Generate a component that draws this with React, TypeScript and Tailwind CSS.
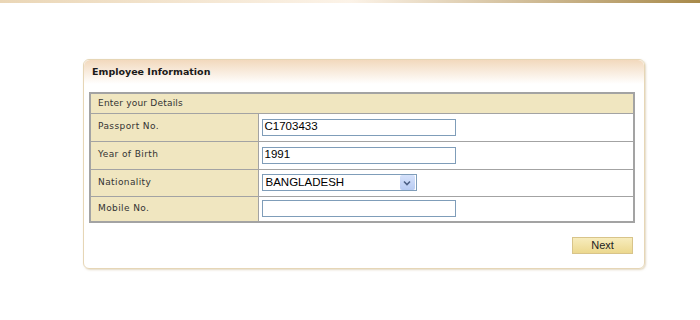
import React from "react";

const rows = [
  { label: "Passport No.", value: "C1703433", h: "h-[28px]" },
  { label: "Year of Birth", value: "1991", h: "h-[28px]" },
  { label: "Nationality", value: "BANGLADESH", select: true, h: "h-[27px]" },
  { label: "Mobile No.", value: "", h: "h-[26px]" },
];

export default function App() {
  return (
    <div className="w-[700px] h-[320px] bg-white relative overflow-hidden" style={{ fontFamily: "'DejaVu Sans', Verdana, sans-serif" }}>
      <div className="h-[3px] w-full bg-gradient-to-r from-[#ead6b6] via-[#fcf3e8] to-[#a88a4a]" />
      <div className="pl-[83px] pt-[56px]">
        <div className="w-[562px] h-[210px] border border-[#e6d6b6] rounded-[6px] shadow-[1px_1px_2px_rgba(200,180,140,0.5)] flex flex-col">
          <div className="h-[24px] rounded-t-[6px] bg-gradient-to-b from-[#f2d9bd] to-[#ffffff] flex items-center pl-[8px]">
            <span className="text-[9.5px] font-bold text-[#1a1a1a]">Employee Information</span>
          </div>
          <div className="pl-[5px] pt-[8px]">
            <table className="w-[546px] border-collapse border-2 border-[#a3a3a3] text-[9px] text-[#333]">
              <tbody>
                <tr className="h-[20px] bg-[#f0e6c0]">
                  <td colSpan={2} className="pl-[7px] border border-[#a3a3a3] tracking-[0.2px]">Enter your Details</td>
                </tr>
                {rows.map((r) => (
                  <tr key={r.label} className={r.h}>
                    <td className="w-[168px] bg-[#f0e6c0] border border-[#a3a3a3] pl-[7px] tracking-[0.4px]">{r.label}</td>
                    <td className="bg-white border border-[#a3a3a3] pl-[3px]">
                      {r.select ? (
                        <div className="w-[155px] h-[17px] border border-[#7f9db9] flex items-center justify-between bg-white">
                          <span className="pl-[3px] text-[11.5px] text-black" style={{ fontFamily: "'Liberation Sans', Arial, sans-serif" }}>{r.value}</span>
                          <span className="w-[15px] h-[15px] mr-[1px] bg-gradient-to-b from-[#d6e2fb] to-[#b8cbf2] flex items-center justify-center rounded-[2px]">
                            <svg width="8" height="6" viewBox="0 0 8 6"><path d="M1 1.5 L4 4.5 L7 1.5" fill="none" stroke="#4d6185" strokeWidth="1.6" /></svg>
                          </span>
                        </div>
                      ) : (
                        <div className="w-[194px] h-[17px] border border-[#7f9db9] flex items-center bg-white">
                          <span className="pl-[2px] text-[11.5px] text-black" style={{ fontFamily: "'Liberation Sans', Arial, sans-serif" }}>{r.value}</span>
                        </div>
                      )}
                    </td>
                  </tr>
                ))}
              </tbody>
            </table>
            <div className="w-[546px] flex justify-end pt-[14px] pr-[2px]">
              <div className="w-[61px] h-[17px] border border-[#d8c48a] bg-gradient-to-b from-[#f7ecbd] to-[#ecd88e] flex items-center justify-center text-[11px] text-[#222]" style={{ fontFamily: "'Liberation Sans', Arial, sans-serif" }}>Next</div>
            </div>
          </div>
        </div>
      </div>
    </div>
  );
}
